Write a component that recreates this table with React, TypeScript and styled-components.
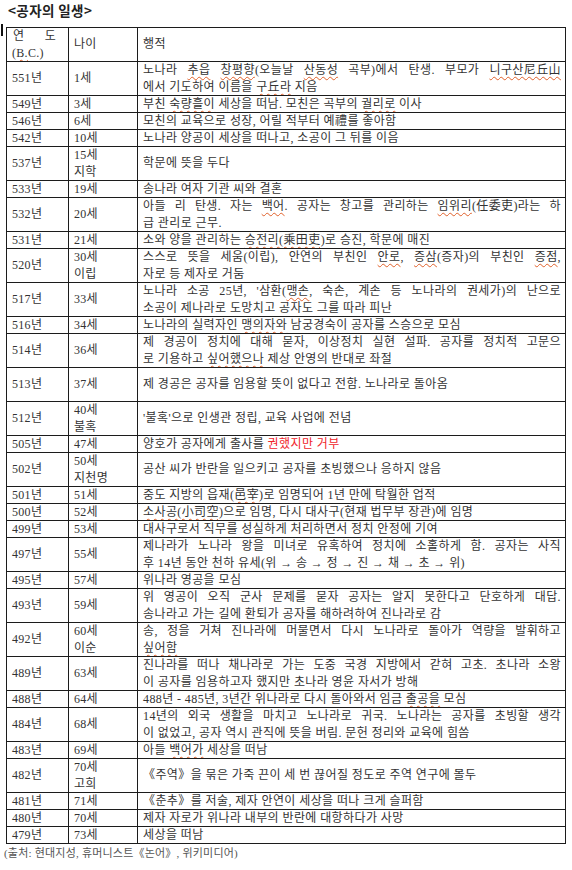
import React from 'react';
import styled, { createGlobalStyle } from 'styled-components';

type Entry = {
  year: string;
  age: string[];
  deed: React.ReactNode[];
  tall?: boolean;
};

const GlobalStyle = createGlobalStyle`
  body {
    margin: 0;
    background: #ffffff;
    font-family: "Liberation Serif", "Noto Sans CJK KR", serif;
    color: #333333;
  }
`;

const Page = styled.div`
  width: 572px;
  padding-top: 1px;
`;

const Title = styled.h1`
  margin: 0 0 0 8px;
  font-family: "Noto Sans CJK KR", sans-serif;
  font-size: 13.5px;
  font-weight: 700;
  line-height: 18px;
  color: #222222;
  letter-spacing: 0.4px;
`;

const TableWrap = styled.div`
  position: relative;
  margin-top: 8px;
  padding-left: 6px;
`;

const Caret = styled.span`
  position: absolute;
  left: 1px;
  top: -3px;
  width: 2px;
  height: 12px;
  background: #111111;
`;

const Table = styled.table`
  width: 560px;
  border-collapse: collapse;
  table-layout: fixed;
  border: 1px solid #111111;
`;

const Row = styled.tr<{ $tall?: boolean }>`
  height: ${({ $tall }) => ($tall ? '34px' : '17px')};
  line-height: ${({ $tall }) => ($tall ? '16.5px' : '16px')};
`;

const Cell = styled.td`
  border: 1px solid #1c1c1c;
  padding: 0 5px;
  vertical-align: middle;
  font-size: 12px;
  letter-spacing: 0.3px;
  color: #333333;
  white-space: nowrap;
  overflow: hidden;
`;

const YearCell = styled(Cell)``;

const AgeCell = styled(Cell)``;

const DeedCell = styled(Cell)`
  padding-right: 4px;
  letter-spacing: 0.4px;
`;

const Line = styled.div<{ $justify?: boolean }>`
  text-align: ${({ $justify }) => ($justify ? 'justify' : 'left')};
  text-align-last: ${({ $justify }) => ($justify ? 'justify' : 'auto')};
  white-space: ${({ $justify }) => ($justify ? 'normal' : 'nowrap')};
`;

const HeadYear = styled.div`
  padding: 0 7px 0 1px;
  text-align: justify;
  text-align-last: justify;
  white-space: normal;
`;

const Spell = styled.span`
  text-decoration: underline wavy #e0602a;
  text-decoration-thickness: 1px;
  text-underline-offset: 2px;
`;

// keeps hanja runs from being spread apart by justification
const Han = styled.span`
  display: inline-block;
`;

const Red = styled.span`
  color: #f0242a;
`;

const Source = styled.p`
  margin: 2px 0 0 4px;
  font-size: 11px;
  line-height: 15px;
  color: #555555;
  letter-spacing: 0.2px;
`;

const entries: Entry[] = [
  {
    year: '551년',
    age: ['1세'],
    deed: [
      <>노나라 <Spell>추읍</Spell> <Spell>창평향</Spell>(오늘날 <Spell>산동성</Spell> 곡부)에서 탄생. 부모가 <Han><Spell>니구산尼丘山</Spell></Han></>,
      <>에서 기도하여 이름을 <Spell>구丘라</Spell> 지음</>,
    ],
  },
  { year: '549년', age: ['3세'], deed: [<>부친 <Spell>숙량흘이</Spell> 세상을 떠남. 모친은 곡부의 <Spell>궐리로</Spell> 이사</>] },
  { year: '546년', age: ['6세'], deed: [<>모친의 교육으로 성장, 어릴 적부터 예禮를 좋아함</>] },
  { year: '542년', age: ['10세'], deed: [<>노나라 양공이 세상을 떠나고, 소공이 그 뒤를 이음</>] },
  { year: '537년', age: ['15세', '지학'], deed: [<>학문에 뜻을 두다</>] },
  { year: '533년', age: ['19세'], deed: [<>송나라 여자 기관 씨와 결혼</>] },
  {
    year: '532년',
    age: ['20세'],
    deed: [
      <>아들 리 탄생. 자는 <Spell>백어</Spell>. 공자는 창고를 관리하는 <Han><Spell>임위리</Spell>(任委吏)라는</Han> 하</>,
      <>급 관리로 근무.</>,
    ],
  },
  { year: '531년', age: ['21세'], deed: [<>소와 양을 관리하는 <Spell>승전리(乘田吏)</Spell>로 승진, 학문에 매진</>] },
  {
    year: '520년',
    age: ['30세', '이립'],
    deed: [
      <>스스로 뜻을 세움(이립), 안연의 부친인 <Spell>안로</Spell>, <Spell>증삼</Spell>(증자)의 부친인 <Spell>증점</Spell>,</>,
      <>자로 등 제자로 거둠</>,
    ],
  },
  {
    year: '517년',
    age: ['33세'],
    deed: [
      <>노나라 소공 25년, '삼환(<Spell>맹손</Spell>, 숙손, 계손 등 노나라의 권세가)의 난으로</>,
      <>소공이 제나라로 도망치고 공자도 그를 따라 피난</>,
    ],
  },
  { year: '516년', age: ['34세'], deed: [<>노나라의 실력자인 <Spell>맹의자와</Spell> 남궁경숙이 공자를 스승으로 모심</>] },
  {
    year: '514년',
    age: ['36세'],
    deed: [
      <>제 경공이 정치에 대해 묻자, 이상정치 실현 설파. 공자를 정치적 고문으</>,
      <>로 기용하고 <Spell>싶어했으나</Spell> 제상 안영의 반대로 좌절</>,
    ],
  },
  { year: '513년', age: ['37세'], deed: [<>제 경공은 공자를 임용할 뜻이 없다고 전함. 노나라로 돌아옴</>], tall: true },
  { year: '512년', age: ['40세', '불혹'], deed: [<>'불혹'으로 인생관 정립, 교육 사업에 전념</>] },
  { year: '505년', age: ['47세'], deed: [<>양호가 공자에게 출사를 <Red>권했지만 거부</Red></>] },
  { year: '502년', age: ['50세', '지천명'], deed: [<>공산 씨가 반란을 일으키고 공자를 초빙했으나 응하지 않음</>] },
  { year: '501년', age: ['51세'], deed: [<>중도 지방의 읍재(<Spell>邑宰</Spell>)로 임명되어 1년 만에 탁월한 업적</>] },
  { year: '500년', age: ['52세'], deed: [<><Spell>소사공(小司空)</Spell>으로 임명, 다시 대사구(현재 법무부 장관)에 임명</>] },
  { year: '499년', age: ['53세'], deed: [<>대사구로서 직무를 성실하게 처리하면서 정치 안정에 기여</>] },
  {
    year: '497년',
    age: ['55세'],
    deed: [
      <>제나라가 노나라 왕을 미녀로 유혹하여 정치에 소홀하게 함. 공자는 사직</>,
      <>후 14년 동안 천하 유세(위 → 송 → 정 → 진 → 채 → 초 → 위)</>,
    ],
  },
  { year: '495년', age: ['57세'], deed: [<>위나라 영공을 모심</>] },
  {
    year: '493년',
    age: ['59세'],
    deed: [
      <>위 영공이 오직 군사 문제를 묻자 공자는 알지 못한다고 단호하게 대답.</>,
      <>송나라고 가는 길에 환퇴가 공자를 해하려하여 진나라로 감</>,
    ],
  },
  {
    year: '492년',
    age: ['60세', '이순'],
    deed: [
      <>송, 정을 거쳐 진나라에 머물면서 다시 노나라로 돌아가 역량을 발휘하고</>,
      <><Spell>싶어함</Spell></>,
    ],
  },
  {
    year: '489년',
    age: ['63세'],
    deed: [
      <>진나라를 떠나 채나라로 가는 도중 국경 지방에서 갇혀 고초. 초나라 소왕</>,
      <>이 공자를 임용하고자 했지만 초나라 영윤 자서가 방해</>,
    ],
  },
  { year: '488년', age: ['64세'], deed: [<>488년 - 485년, 3년간 위나라로 다시 돌아와서 임금 <Spell>출공을</Spell> 모심</>] },
  {
    year: '484년',
    age: ['68세'],
    deed: [
      <>14년의 외국 생활을 마치고 노나라로 귀국. 노나라는 공자를 초빙할 생각</>,
      <>이 없었고, 공자 역시 관직에 뜻을 버림. 문헌 정리와 교육에 힘씀</>,
    ],
  },
  { year: '483년', age: ['69세'], deed: [<>아들 <Spell>백어가</Spell> 세상을 떠남</>] },
  { year: '482년', age: ['70세', '고희'], deed: [<>《주역》을 묶은 가죽 끈이 세 번 끊어질 정도로 주역 연구에 몰두</>] },
  { year: '481년', age: ['71세'], deed: [<>《춘추》를 저술, 제자 안연이 세상을 떠나 크게 슬퍼함</>] },
  { year: '480년', age: ['70세'], deed: [<>제자 자로가 위나라 내부의 반란에 대항하다가 사망</>] },
  { year: '479년', age: ['73세'], deed: [<>세상을 떠남</>] },
];

export default function App() {
  return (
    <>
      <GlobalStyle />
      <Page>
        <Title>&lt;공자의 일생&gt;</Title>
        <TableWrap>
          <Caret />
          <Table>
            <colgroup>
              <col style={{ width: 62 }} />
              <col style={{ width: 69 }} />
              <col />
            </colgroup>
            <tbody>
              <Row $tall>
                <YearCell>
                  <HeadYear>연 도</HeadYear>
                  <Line>(<Spell>B.</Spell>C.)</Line>
                </YearCell>
                <AgeCell>나이</AgeCell>
                <DeedCell>행적</DeedCell>
              </Row>
              {entries.map((e) => {
                const tall = e.tall || e.age.length > 1 || e.deed.length > 1;
                return (
                  <Row key={e.year} $tall={tall}>
                    <YearCell>{e.year}</YearCell>
                    <AgeCell>
                      {e.age.map((a) => (
                        <Line key={a}>{a}</Line>
                      ))}
                    </AgeCell>
                    <DeedCell>
                      {e.deed.map((d, i) => (
                        <Line key={i} $justify={e.deed.length > 1 && i === 0}>
                          {d}
                        </Line>
                      ))}
                    </DeedCell>
                  </Row>
                );
              })}
            </tbody>
          </Table>
        </TableWrap>
        <Source>(출처: 현대지성, 휴머니스트《논어》, 위키미디어)</Source>
      </Page>
    </>
  );
}
